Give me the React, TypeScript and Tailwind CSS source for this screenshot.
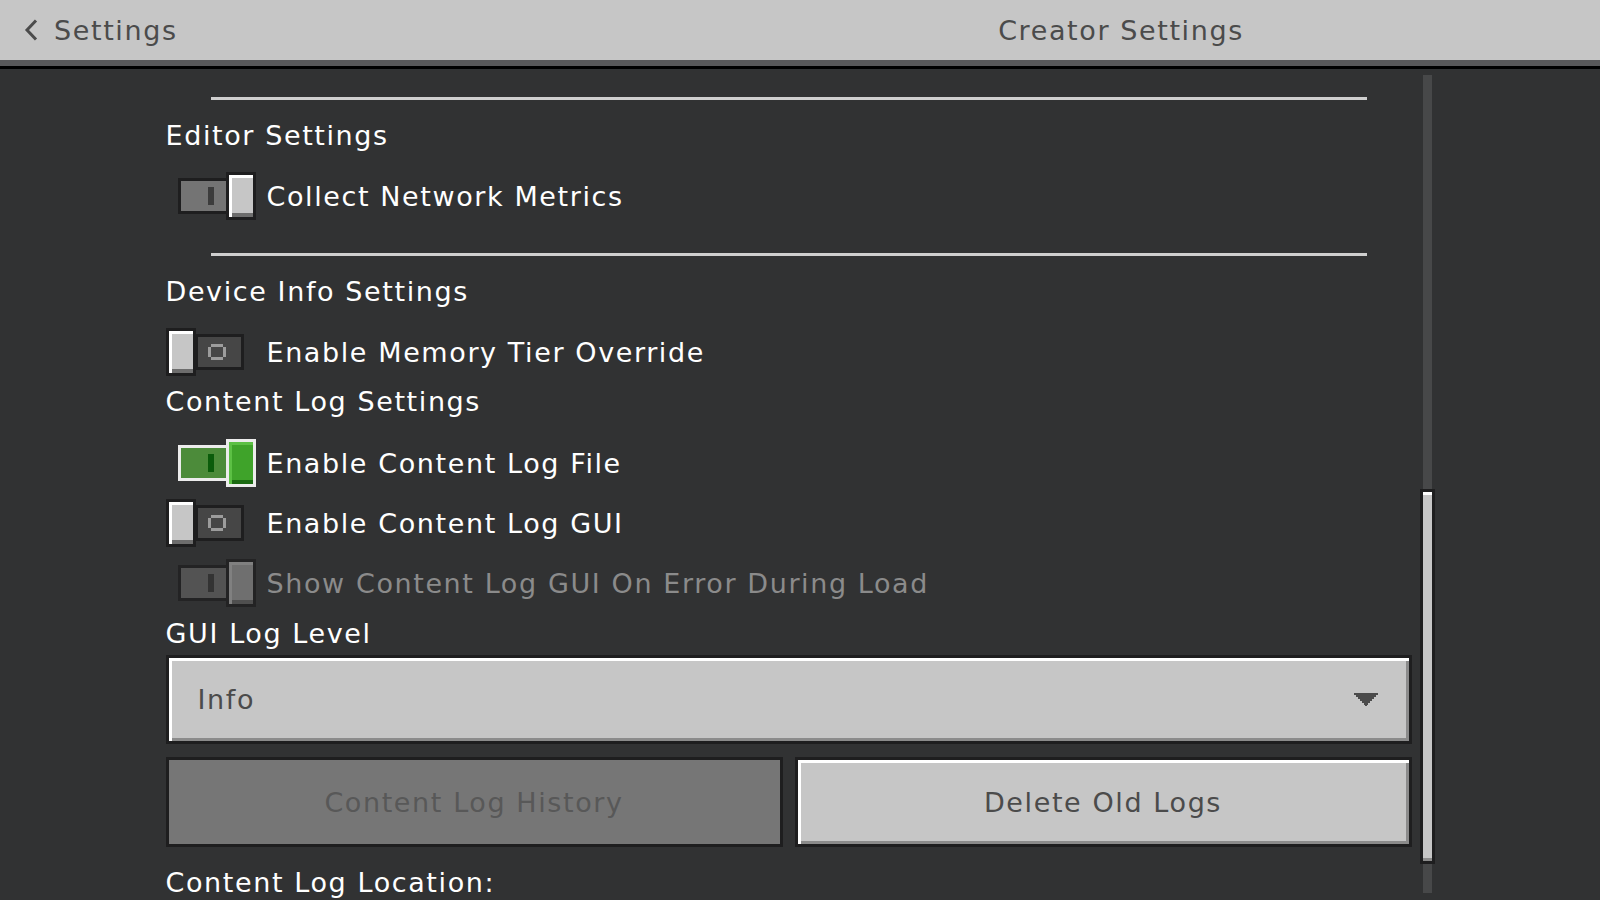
import React from 'react';

type Kind = 'on' | 'off' | 'green' | 'disabled';

function Ring() {
  return (
    <svg width="18" height="16" viewBox="0 0 18 16" className="shrink-0">
      <rect x="3" y="0" width="12" height="3" fill="#9c9c9c" />
      <rect x="3" y="13" width="12" height="3" fill="#9c9c9c" />
      <rect x="0" y="3" width="3" height="10" fill="#9c9c9c" />
      <rect x="15" y="3" width="3" height="10" fill="#9c9c9c" />
    </svg>
  );
}

function Toggle({ kind }: { kind: Kind }) {
  if (kind === 'off') {
    return (
      <div className="relative w-[90px] h-[48px] shrink-0">
        <div className="absolute left-[29px] top-[6px] w-[49px] h-[36px] border-[3px] border-[#1e1e1f] bg-[#464646] flex items-center pl-[10px]">
          <Ring />
        </div>
        <div className="absolute left-0 top-0 w-[30px] h-[48px] border-[3px] border-[#1e1e1f] bg-[#c6c6c6] shadow-[inset_3px_3px_0_#ffffff,inset_0_-4px_0_#6d6d6d]" />
      </div>
    );
  }
  const styles: Record<string, { track: string; bar: string; knob: string }> = {
    on: {
      track: 'border-[#1e1e1f] bg-[#747474]',
      bar: 'bg-[#3c3c3c]',
      knob: 'border-[#1e1e1f] bg-[#c6c6c6] shadow-[inset_3px_3px_0_#ffffff,inset_0_-4px_0_#6d6d6d]',
    },
    green: {
      track: 'border-[#ececec] bg-[#4c8b3a]',
      bar: 'bg-[#0b5c0b]',
      knob: 'border-[#ececec] bg-[#3fa32a] shadow-[inset_3px_3px_0_#5cc044,inset_0_-4px_0_#1b6a12]',
    },
    disabled: {
      track: 'border-[#232324] bg-[#535353]',
      bar: 'bg-[#333333]',
      knob: 'border-[#232324] bg-[#6f6f6f] shadow-[inset_3px_3px_0_#808080,inset_0_-4px_0_#4f4f4f]',
    },
  };
  const s = styles[kind];
  return (
    <div className="relative w-[90px] h-[48px] shrink-0">
      <div className={`absolute left-[12px] top-[6px] w-[51px] h-[36px] border-[3px] flex items-center pl-[27px] ${s.track}`}>
        <div className={`w-[6px] h-[18px] ${s.bar}`} />
      </div>
      <div className={`absolute left-[60px] top-0 w-[30px] h-[48px] border-[3px] ${s.knob}`} />
    </div>
  );
}

function ToggleRow({ kind, label, mt }: { kind: Kind; label: string; mt: string }) {
  return (
    <div className={`flex items-center h-[48px] shrink-0 gap-[11px] ${mt}`}>
      <Toggle kind={kind} />
      <span className={kind === 'disabled' ? 'text-[#8b8b8b]' : 'text-white'}>{label}</span>
    </div>
  );
}

function Heading({ text, cls }: { text: string; cls: string }) {
  return <div className={`flex items-center shrink-0 text-white ${cls}`}>{text}</div>;
}

function Separator({ mt }: { mt: string }) {
  return <div className={`h-[3px] shrink-0 mx-[45px] bg-[#cfcfcf] ${mt}`} />;
}

export default function App() {
  return (
    <div className="w-[1600px] h-[900px] overflow-hidden bg-[#313233] font-['DejaVu_Sans',sans-serif] text-[27px] tracking-[1.6px] leading-none">
      <div className="h-[60px] bg-[#c6c6c6] flex text-[#4b4b4b]">
        <div className="w-[642px] flex items-center pl-[24px] gap-[16px]">
          <svg width="14" height="22" viewBox="0 0 14 22" className="shrink-0">
            <path d="M12 1.5 L3 11 L12 20.5" fill="none" stroke="#4b4b4b" strokeWidth="3" strokeLinejoin="miter" />
          </svg>
          <span>Settings</span>
        </div>
        <div className="flex-1 flex items-center justify-center">
          <span>Creator Settings</span>
        </div>
      </div>
      <div className="h-[6px] bg-[#58585a]" />
      <div className="h-[3px] bg-black" />
      <div className="w-[1269px] mx-auto flex gap-[8px] h-[831px]">
        <div className="w-[1246px] flex flex-col">
          <Separator mt="mt-[28px]" />
          <Heading text="Editor Settings" cls="h-[50px] mt-[10px]" />
          <ToggleRow kind="on" label="Collect Network Metrics" mt="mt-[12px]" />
          <Separator mt="mt-[33px]" />
          <Heading text="Device Info Settings" cls="h-[50px] mt-[10px]" />
          <ToggleRow kind="off" label="Enable Memory Tier Override" mt="mt-[12px]" />
          <Heading text="Content Log Settings" cls="h-[50px]" />
          <ToggleRow kind="green" label="Enable Content Log File" mt="mt-[13px]" />
          <ToggleRow kind="off" label="Enable Content Log GUI" mt="mt-[12px]" />
          <ToggleRow kind="disabled" label="Show Content Log GUI On Error During Load" mt="mt-[12px]" />
          <Heading text="GUI Log Level" cls="h-[48px] pt-[4px]" />
          <div className="h-[89px] shrink-0 border-[3px] border-[#1e1e1f] bg-[#c6c6c6] shadow-[inset_3px_3px_0_#ffffff,inset_-3px_-3px_0_#8b8b8b] flex items-center justify-between pl-[29px] pr-[31px] text-[#4b4b4b]">
            <span>Info</span>
            <svg width="24" height="13" viewBox="0 0 24 13">
              <path d="M0 0 H24 V2 H22 V4 H20 V6 H18 V8 H16 V10 H14 V12 H13 V13 H11 V12 H10 V10 H8 V8 H6 V6 H4 V4 H2 V2 H0 Z" fill="#4b4b4b" />
            </svg>
          </div>
          <div className="flex gap-[12px] mt-[13px] h-[90px] shrink-0">
            <div className="flex-1 border-[3px] border-[#1e1e1f] bg-[#767676] flex items-center justify-center text-[#585858]">
              Content Log History
            </div>
            <div className="flex-1 border-[3px] border-[#1e1e1f] bg-[#c6c6c6] shadow-[inset_3px_3px_0_#ffffff,inset_-3px_-3px_0_#8b8b8b] flex items-center justify-center text-[#4b4b4b]">
              Delete Old Logs
            </div>
          </div>
          <Heading text="Content Log Location:" cls="h-[50px] mt-[10px]" />
        </div>
        <div className="relative w-[15px] shrink-0">
          <div className="absolute left-[3px] top-[6px] bottom-[7px] w-[9px] bg-[#474849]" />
          <div className="absolute left-0 top-[420px] w-[15px] h-[375px] border-[3px] border-[#1e1e1f] bg-[#c6c6c6] shadow-[inset_0_3px_0_#ffffff,inset_0_-3px_0_#8b8b8b]" />
        </div>
      </div>
    </div>
  );
}
